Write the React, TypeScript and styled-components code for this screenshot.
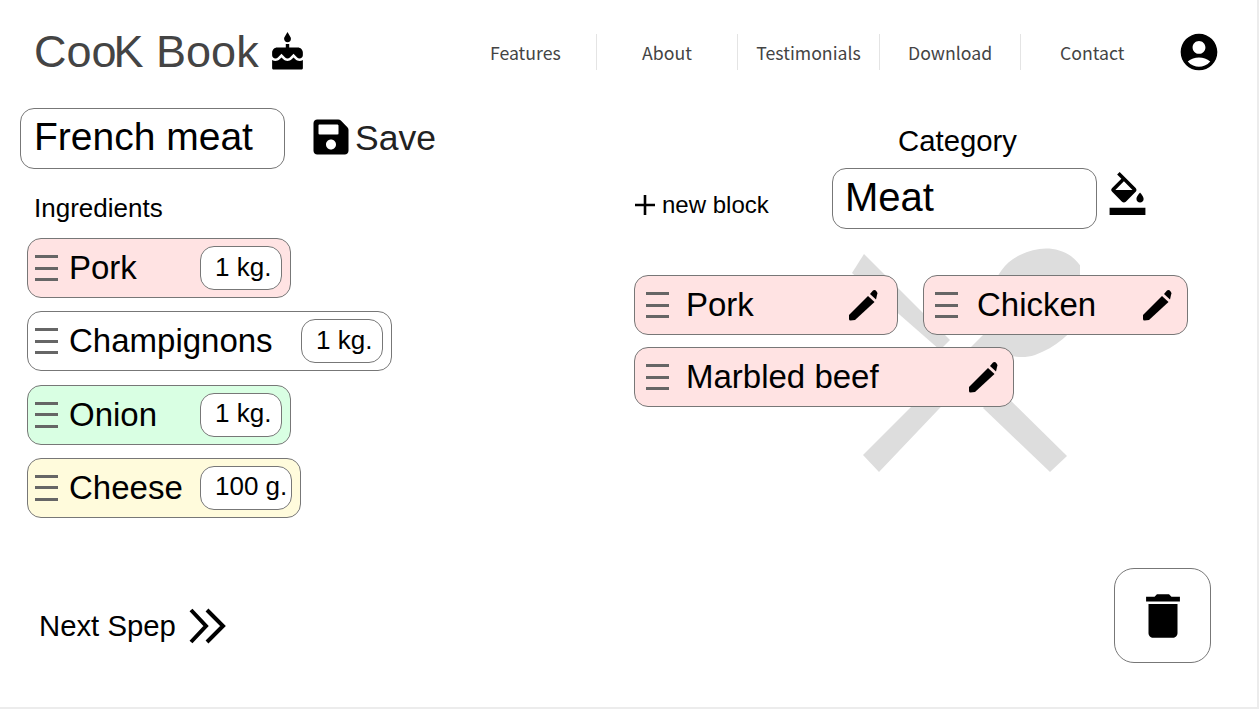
import styled, { createGlobalStyle } from 'styled-components';
import { FaSave } from 'react-icons/fa';
import { MdAccountCircle, MdCake, MdDelete, MdFormatColorFill } from 'react-icons/md';

const GlobalStyle = createGlobalStyle`
  html, body {
    margin: 0;
    padding: 0;
    background: #ffffff;
  }

  body {
    font-family: "Liberation Sans", Arial, sans-serif;
    color: #000000;
  }
`;

const Page = styled.div`
  position: relative;
  box-sizing: border-box;
  width: 1259px;
  height: 709px;
  border-right: 2px solid #ececec;
  border-bottom: 2px solid #ececec;
  display: flex;
  flex-direction: column;
  overflow: hidden;
`;

const Header = styled.header`
  display: flex;
  align-items: center;
  justify-content: space-between;
  height: 108px;
  padding: 0 36px 4px 34px;
  box-sizing: border-box;
`;

const Logo = styled.div`
  display: flex;
  align-items: center;
  gap: 8px;
  font-size: 45px;
  color: #444444;
`;

const LogoTight = styled.span`
  letter-spacing: -3px;
`;

const Nav = styled.nav`
  display: flex;
  align-items: center;
`;

const NavItem = styled.a`
  width: 141.6px;
  height: 36px;
  display: flex;
  align-items: center;
  justify-content: center;
  font-family: "Noto Sans CJK SC", "Noto Sans", sans-serif;
  font-size: 17.7px;
  color: #444444;
  border-right: 1px solid #e4e4e4;
  box-sizing: border-box;

  &:last-of-type {
    border-right: none;
  }
`;

const UserButton = styled.span`
  display: flex;
  margin-left: 14px;
  font-size: 44px;
  color: #000000;
`;

const Main = styled.main`
  display: flex;
  flex: 1;
  padding-left: 20px;
`;

const LeftColumn = styled.section`
  width: 614px;
`;

const TitleRow = styled.div`
  display: flex;
  align-items: center;
  gap: 26px;
`;

const TextField = styled.div<{ $inset: number; $size: number }>`
  box-sizing: border-box;
  width: 265px;
  height: 61px;
  padding: 0 ${({ $inset }) => $inset}px 3px;
  display: flex;
  align-items: center;
  border: 1px solid #777777;
  border-radius: 14px;
  background: #ffffff;
  font-size: ${({ $size }) => $size}px;
`;

const SaveButton = styled.div`
  display: flex;
  align-items: center;
  gap: 4px;
  font-size: 35.5px;
  color: #222222;

  svg {
    font-size: 40px;
    margin-top: -3px;
    color: #000000;
  }
`;

const SectionLabel = styled.div`
  margin: 24px 0 15px 14px;
  font-size: 26px;
  line-height: 30px;
`;

const IngredientList = styled.div`
  display: flex;
  flex-direction: column;
  align-items: flex-start;
  gap: 13.3px;
  padding-left: 7px;
`;

const IngredientRow = styled.div<{ $bg: string }>`
  box-sizing: border-box;
  height: 60px;
  display: flex;
  align-items: center;
  padding: 0 8px 0 7px;
  border: 1px solid #777777;
  border-radius: 14px;
  background: ${({ $bg }) => $bg};
`;

const DragHandle = styled.span`
  flex: none;
  width: 23px;
  height: 26px;
  border-top: 3px solid #666666;
  border-bottom: 3px solid #666666;
  box-sizing: border-box;
  position: relative;

  &::before {
    content: '';
    position: absolute;
    left: 0;
    right: 0;
    top: 8.5px;
    height: 3px;
    background: #666666;
  }
`;

const IngredientName = styled.span<{ $width: number }>`
  width: ${({ $width }) => $width}px;
  margin-left: 11px;
  font-size: 33px;
`;

const Quantity = styled.span`
  box-sizing: border-box;
  height: 44px;
  min-width: 82px;
  display: flex;
  align-items: center;
  padding: 0 4px 2px 14px;
  border: 1px solid #777777;
  border-radius: 14px;
  background: #ffffff;
  font-size: 26px;
`;

const RightColumn = styled.section`
  position: relative;
  flex: 1;
`;

const CategoryBar = styled.div`
  display: flex;
  align-items: flex-end;
`;

const NewBlock = styled.div`
  display: flex;
  align-items: center;
  gap: 6px;
  width: 198px;
  margin-bottom: 10px;
  font-size: 24px;
`;

const CategoryGroup = styled.div`
  display: flex;
  flex-direction: column;
`;

const CategoryLabel = styled.div`
  text-align: center;
  font-size: 29.3px;
  line-height: 34px;
  margin-top: 16px;
  margin-bottom: 10px;
  padding-right: 14px;
`;

const FillButton = styled.span`
  display: flex;
  margin: 0 0 14px 9px;
  font-size: 43px;
`;

const Cards = styled.div`
  position: relative;
  display: flex;
  flex-wrap: wrap;
  gap: 12px 25px;
  width: 560px;
  margin-top: 46px;
`;

const Card = styled.div<{ $width: number; $padRight: number }>`
  box-sizing: border-box;
  width: ${({ $width }) => $width}px;
  height: 60px;
  display: flex;
  align-items: center;
  padding: 0 ${({ $padRight }) => $padRight}px 0 11px;
  border: 1px solid #777777;
  border-radius: 14px;
  background: #ffe3e3;
`;

const CardName = styled.span<{ $gap: number }>`
  flex: 1;
  margin-left: ${({ $gap }) => $gap}px;
  font-size: 33px;
`;

const Watermark = styled.svg`
  position: absolute;
  left: 206px;
  top: 132px;
  width: 240px;
  height: 240px;
`;

const Footer = styled.footer`
  display: flex;
  align-items: center;
  justify-content: space-between;
  padding: 0 46px 44px 39px;
`;

const NextStep = styled.div`
  display: flex;
  align-items: center;
  gap: 13px;
  padding-top: 20px;
  font-size: 29.3px;
`;

const TrashButton = styled.div`
  box-sizing: border-box;
  width: 97px;
  height: 95px;
  display: flex;
  align-items: center;
  justify-content: center;
  border: 1px solid #777777;
  border-radius: 20px;
  font-size: 58px;
`;

const navItems = ['Features', 'About', 'Testimonials', 'Download', 'Contact'];

const ingredients = [
  { name: 'Pork', amount: '1 kg.', bg: '#ffe3e3', nameWidth: 131 },
  { name: 'Champignons', amount: '1 kg.', bg: '#ffffff', nameWidth: 232 },
  { name: 'Onion', amount: '1 kg.', bg: '#d9ffe3', nameWidth: 131 },
  { name: 'Cheese', amount: '100 g.', bg: '#fffbdc', nameWidth: 131 },
];

const cards = [
  { name: 'Pork', width: 264, padRight: 19, gap: 17 },
  { name: 'Chicken', width: 265, padRight: 15, gap: 19 },
  { name: 'Marbled beef', width: 380, padRight: 15, gap: 17 },
];

const PencilIcon = () => (
  <svg width="29" height="32" viewBox="0 0 29 32" fill="#000000">
    <path d="M0 26 L19 7 L25.5 13 L6 31 L1.5 31.6 Q0 31.6 0 30 Z" />
    <path d="M21 5 L24 1.5 Q25 0.5 26.5 1.2 L28 3 Q29 4.5 28 6 L27 10.5 Z" />
  </svg>
);

const App = () => {
  return (
    <Page>
      <GlobalStyle />
      <Header>
        <Logo>
          <span>
            Co<LogoTight>o</LogoTight>K Book
          </span>
          <MdCake size={41} color="#000000" />
        </Logo>
        <Nav>
          {navItems.map((item) => (
            <NavItem key={item}>{item}</NavItem>
          ))}
          <UserButton>
            <MdAccountCircle />
          </UserButton>
        </Nav>
      </Header>

      <Main>
        <LeftColumn>
          <TitleRow>
            <TextField $inset={13} $size={39}>French meat</TextField>
            <SaveButton>
              <FaSave />
              Save
            </SaveButton>
          </TitleRow>
          <SectionLabel>Ingredients</SectionLabel>
          <IngredientList>
            {ingredients.map((item) => (
              <IngredientRow key={item.name} $bg={item.bg}>
                <DragHandle />
                <IngredientName $width={item.nameWidth}>{item.name}</IngredientName>
                <Quantity>{item.amount}</Quantity>
              </IngredientRow>
            ))}
          </IngredientList>
        </LeftColumn>

        <RightColumn>
          <Watermark viewBox="0 0 240 240" fill="#dddddd">
            <path d="M24 14 L110 100 L100 110 L12 33 Z" />
            <path d="M143 168 L160 150 L227 216 L210 232 Z" />
            <path d="M23 215 L148 90 C150 60 150 30 180 15 C205 2 235 8 245 35 C255 65 235 100 195 115 C180 120 165 115 155 110 L39 232 Z" />
          </Watermark>
          <CategoryBar>
            <NewBlock>
              <svg width="22" height="22" viewBox="0 0 22 22">
                <path d="M11 1v20M1 11h20" stroke="#000000" strokeWidth="2.6" />
              </svg>
              new block
            </NewBlock>
            <CategoryGroup>
              <CategoryLabel>Category</CategoryLabel>
              <TextField $inset={12} $size={40}>Meat</TextField>
            </CategoryGroup>
            <FillButton>
              <MdFormatColorFill />
            </FillButton>
          </CategoryBar>
          <Cards>
            {cards.map((card) => (
              <Card key={card.name} $width={card.width} $padRight={card.padRight}>
                <DragHandle />
                <CardName $gap={card.gap}>{card.name}</CardName>
                <PencilIcon />
              </Card>
            ))}
          </Cards>
        </RightColumn>
      </Main>

      <Footer>
        <NextStep>
          Next Spep
          <svg width="37" height="36" viewBox="0 0 37 36" fill="none" stroke="#000000" strokeWidth="4">
            <path d="M2 2l15 16L2 34M18 2l16 16L18 34" />
          </svg>
        </NextStep>
        <TrashButton>
          <MdDelete />
        </TrashButton>
      </Footer>
    </Page>
  );
};

export default App;
